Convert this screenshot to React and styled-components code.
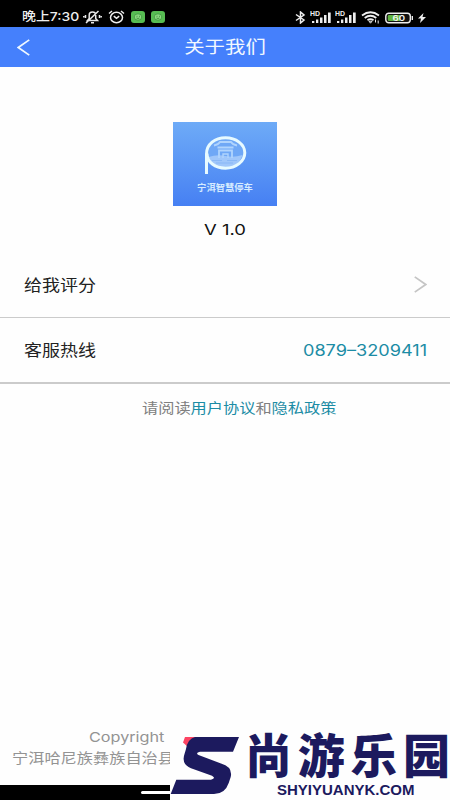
import React from 'react';
import styled, { createGlobalStyle } from 'styled-components';

const GlobalStyle = createGlobalStyle`
  * {
    box-sizing: border-box;
  }

  body {
    margin: 0;
    background: #fefefe;
    font-family: Inter, 'Noto Sans CJK SC', sans-serif;
  }
`;

const Page = styled.div`
  width: 450px;
  height: 800px;
  display: flex;
  flex-direction: column;
  position: relative;
  overflow: hidden;
  background: #fefefe;
`;

const StatusBar = styled.div`
  height: 27px;
  flex: none;
  display: flex;
  align-items: center;
  justify-content: space-between;
  padding: 8px 24px 0 22px;
  background: #000;
  color: #eee;
`;

const StatusGroup = styled.div`
  display: flex;
  align-items: center;
  gap: ${(p) => p.$gap || 0}px;
`;

// wide lettering: the text is drawn at its own size and stretched sideways
const Wide = styled.span`
  display: inline-block;
  white-space: pre;
  font-size: ${(p) => p.$size}px;
  line-height: 1.4;
  font-weight: ${(p) => p.$weight || 400};
  color: ${(p) => p.$color || 'inherit'};
  transform: scaleX(${(p) => p.$stretch || 1});
  transform-origin: ${(p) => p.$origin || 'left'} center;
`;

const ClockSlot = styled.div`
  width: 61px;
  display: flex;
`;

const Header = styled.header`
  height: 40px;
  flex: none;
  display: grid;
  grid-template-columns: 50px 1fr 50px;
  align-items: center;
  background: #4580fc;
  color: #f2f8ff;
`;

const BackButton = styled.button`
  display: flex;
  padding: 0 0 0 17px;
  border: 0;
  background: none;
  color: inherit;
`;

const Title = styled.div`
  padding-top: 2px;
  text-align: center;
`;

const Brand = styled.section`
  height: 186px;
  flex: none;
  display: flex;
  flex-direction: column;
  align-items: center;
  padding-top: 55px;
`;

const LogoBox = styled.div`
  width: 104px;
  height: 84px;
  margin-bottom: 13px;
  display: flex;
  flex-direction: column;
  align-items: center;
  gap: 4px;
  padding-top: 11px;
  background: linear-gradient(#6eabf7, #4680f3);
  color: #d5ebff;
`;

const Row = styled.div`
  height: ${(p) => p.$height}px;
  flex: none;
  display: flex;
  align-items: center;
  justify-content: space-between;
  padding: 2px 23px 0 24px;
  border-bottom: ${(p) => p.$line}px solid #cbcbcb;
  color: #222;
`;

const RowArrow = styled.div`
  display: flex;
  padding-bottom: 3px;
`;

const Agreement = styled.p`
  margin: 15px 0 0 142px;
  display: flex;
  color: #808080;
`;

const LinkText = styled.span`
  color: #1c8ca5;
`;

const Footer = styled.footer`
  margin-top: auto;
  height: 59px;
  flex: none;
  display: flex;
  flex-direction: column;
  padding-left: 12px;
  color: #939393;
`;

const Copyright = styled.div`
  height: 23px;
  padding-left: 77px;
`;

const NavBar = styled.div`
  height: 15px;
  flex: none;
  display: flex;
  align-items: center;
  justify-content: center;
  background: #000;
`;

const NavHandle = styled.div`
  width: 168px;
  height: 3px;
  border-radius: 2px;
  background: #fff;
`;

const Watermark = styled.div`
  position: absolute;
  right: 0;
  bottom: 0;
  width: 280px;
  height: 71px;
  display: flex;
  background: #fefefe;
  color: #1c1a5e;
`;

const WatermarkText = styled.div`
  display: flex;
  flex-direction: column;
  width: 207px;
  height: 71px;
  padding-left: 2px;
`;

const WatermarkName = styled.div`
  height: 53px;
  display: flex;
  justify-content: space-between;
  font: 900 47px/48px 'Noto Sans CJK SC', sans-serif;
`;

const WatermarkUrl = styled.div`
  padding-left: 32px;
  font: 700 15px/16px 'Liberation Sans', sans-serif;
`;

function MuteIcon() {
  return (
    <svg width="19" height="14" viewBox="0 0 19 14" fill="none" stroke="#e8e8e8" strokeWidth="1.5">
      <path d="M4.5 10.5h10l-1.800-2V5c0-4-6.500-4-6.500 0v3.500zM8 12.800h3M3 13 15.500 1M2.500 5v3M.8 6v1.500M16.500 5v3M18.200 6v1.500" />
    </svg>
  );
}

function AlarmIcon() {
  return (
    <svg width="17" height="14" viewBox="0 0 17 14" fill="none" stroke="#eee" strokeWidth="1.5">
      <ellipse cx="8.5" cy="7.5" rx="6" ry="5.2" />
      <path d="M1 3.5 4 1M16 3.5 13 1M5.8 6.2l2.7 2.2 2.7-2.2" />
    </svg>
  );
}

function AppBadge() {
  return (
    <svg width="14" height="12" viewBox="0 0 14 12">
      <rect width="14" height="12" rx="3" fill="#57bd53" />
      <ellipse cx="7" cy="6" rx="3.8" ry="3.2" fill="#8bda80" stroke="#338e35" strokeWidth=".7" />
      <path d="M5.5 5.3h1M8 5.3h1M5.5 7q1.5 1 3 0" stroke="#287a2b" strokeWidth=".7" fill="none" />
    </svg>
  );
}

function BluetoothIcon() {
  return (
    <svg width="11" height="13" viewBox="0 0 11 13" fill="none" stroke="#eee" strokeWidth="1.5">
      <path d="M1 3.5 9 9 5.5 12V1L9 4 1 9.5" />
    </svg>
  );
}

function SignalIcon() {
  return (
    <svg width="22" height="13" viewBox="0 0 22 13" fill="#eee">
      <text x="0" y="5" fontFamily="Liberation Sans, sans-serif" fontWeight="700" fontSize="6.5" textLength="10" lengthAdjust="spacingAndGlyphs">HD</text>
      <path d="M2 10h2.300v2H2zM6 8.500h2.300V12H6zM10 6.500h2.500V12H10zM14 4h2.500v8H14zM18 1.500h2.700V12H18z" />
    </svg>
  );
}

function WifiIcon() {
  return (
    <svg width="20" height="13" viewBox="0 0 20 13" fill="none" stroke="#eee" strokeWidth="1.8">
      <path d="M1 4.5q8.500-6.500 17 0M3.700 7q5.800-4.500 11.600 0M6.500 9.300q3-2.300 6 0" />
      <path d="M8 10.200h3l-1.500 2zM14.500 8.500v3M17.200 9.500v3" strokeWidth="1" />
    </svg>
  );
}

function BatteryIcon() {
  return (
    <svg width="29" height="12" viewBox="0 0 29 12">
      <rect x=".8" y="1.2" width="24.5" height="9.6" rx="3" fill="#111" stroke="#eee" strokeWidth="1.4" />
      <path d="M4 3h11v6H4q-1.200 0-1.200-1.200V4.200Q2.800 3 4 3z" fill="#5fb33f" />
      <path d="M27.300 4v4" stroke="#eee" strokeWidth="1.4" />
      <text x="7.5" y="9" fontFamily="Inter, sans-serif" fontWeight="600" fontSize="8.2" fill="#f5f5f5" textLength="12.5" lengthAdjust="spacingAndGlyphs">60</text>
    </svg>
  );
}

function BoltIcon() {
  return (
    <svg width="8" height="10" viewBox="0 0 8 10" fill="#eee">
      <path d="M5.500 0 0 5.500h3L2 10l6-6H4.500z" />
    </svg>
  );
}

function Chevron({ dir, width, height, color }) {
  return (
    <svg width={width} height={height} viewBox="0 0 12 16" preserveAspectRatio="none" fill="none" stroke={color} strokeWidth="1.6">
      <path d={dir === 'left' ? 'M11.300.8 1.200 8l10.100 7.200' : 'M.700.800 10.800 8 .700 15.200'} />
    </svg>
  );
}

function ParkingMark() {
  return (
    <svg width="46" height="44" viewBox="0 0 46 44" fill="none">
      <ellipse cx="23.5" cy="20" rx="18" ry="14.8" fill="#6fa8f6" />
      <path d="M6.500 24q9-3 17-1t17-1q-4 12.500-17 12.500T6.500 24z" fill="#a0c7fa" />
      <path d="M12 12.500q4.500-1 6-3.500h11q1.500 2.500 6 3.500" stroke="#b0d4fd" strokeWidth="1.8" />
      <path d="M15.500 14.500h16M17 25v-7.500h13V25" stroke="#b0d4fd" strokeWidth="1.8" />
      <path d="M21 25v-4h5v4" stroke="#b0d4fd" strokeWidth="1.4" />
      <path d="M10 27.500h10M25 27.500h10M14 30h17" stroke="#83b4f5" strokeWidth=".8" />
      <path d="M4.500 41V21C4.500 11 13 4.800 23.500 4.800s19.300 6.500 19.300 15-8.800 15.400-19.300 15.400S5 29 5 20.500" stroke="#e7faff" strokeWidth="3" />
    </svg>
  );
}

function SwooshMark() {
  return (
    <svg width="73" height="71" viewBox="0 0 73 71">
      <path d="M15 8h15L18 18l-5-4.500z" fill="#fc4463" />
      <path d="M25 8h44l-6 14.700H30q-5 1.300-1.500 3.300L51 34.500Q63 38 60.700 48l-2 6Q55 65 44 65H.7L6.300 50.700H41q5.500-1.300 1-4L21 39.300Q11 35 14.500 25l1.500-5q1.500-10 9-12z" fill="#1c1a5e" />
    </svg>
  );
}

function App() {
  return (
    <>
      <GlobalStyle />
      <Page>
        <StatusBar>
          <StatusGroup>
            <ClockSlot>
              <Wide $size={12} $stretch={1.16} $weight={500}>晚上7:30</Wide>
            </ClockSlot>
            <StatusGroup $gap={6}>
              <MuteIcon />
              <AlarmIcon />
              <AppBadge />
              <AppBadge />
            </StatusGroup>
          </StatusGroup>
          <StatusGroup $gap={4}>
            <BluetoothIcon />
            <StatusGroup $gap={3}>
              <SignalIcon />
              <SignalIcon />
            </StatusGroup>
            <WifiIcon />
            <BatteryIcon />
            <BoltIcon />
          </StatusGroup>
        </StatusBar>

        <Header>
          <BackButton aria-label="返回">
            <Chevron dir="left" width={13} height={17} color="#eef7ff" />
          </BackButton>
          <Title>
            <Wide $size={17} $stretch={1.2} $origin="center">关于我们</Wide>
          </Title>
        </Header>

        <Brand>
          <LogoBox>
            <ParkingMark />
            <Wide $size={9.3} $weight={700} $origin="center">宁洱智慧停车</Wide>
          </LogoBox>
          <Wide $size={15} $stretch={1.23} $origin="center" $color="#111">V 1.0</Wide>
        </Brand>

        <Row $height={65} $line={1}>
          <Wide $size={15.5} $stretch={1.16}>给我评分</Wide>
          <RowArrow>
            <Chevron dir="right" width={13} height={17} color="#c5c5c5" />
          </RowArrow>
        </Row>
        <Row $height={66} $line={2}>
          <Wide $size={15.5} $stretch={1.16}>客服热线</Wide>
          <Wide $size={15.5} $stretch={1.17} $origin="right" $color="#1c8ca5">0879–3209411</Wide>
        </Row>

        <Agreement>
          <Wide $size={13.5} $stretch={1.2}>
            请阅读<LinkText>用户协议</LinkText>和<LinkText>隐私政策</LinkText>
          </Wide>
        </Agreement>

        <Footer>
          <Copyright>
            <Wide $size={13.5} $stretch={1.2}>Copyright</Wide>
          </Copyright>
          <Wide $size={13.5} $stretch={1.2}>宁洱哈尼族彝族自治县</Wide>
        </Footer>
        <NavBar>
          <NavHandle />
        </NavBar>

        <Watermark>
          <SwooshMark />
          <WatermarkText>
            <WatermarkName>
              {[...'尚游乐园'].map((char) => (
                <span key={char}>{char}</span>
              ))}
            </WatermarkName>
            <WatermarkUrl>SHYIYUANYK.COM</WatermarkUrl>
          </WatermarkText>
        </Watermark>
      </Page>
    </>
  );
}

export default App;
